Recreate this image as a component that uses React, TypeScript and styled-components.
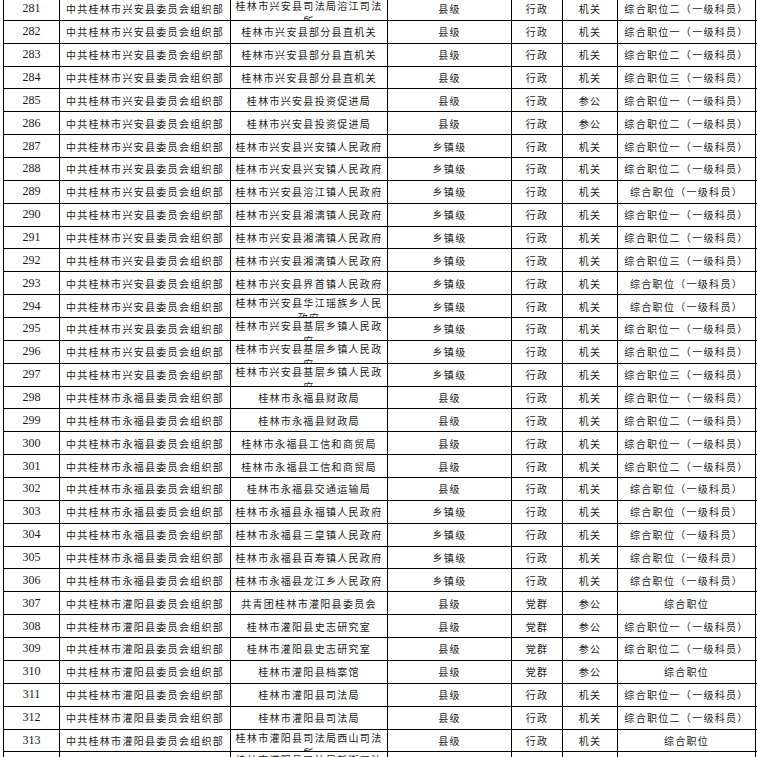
import { createGlobalStyle, styled } from "styled-components";

type Row = [number, string, string, string, string, string, string, boolean?];

const XA = "中共桂林市兴安县委员会组织部";
const YF = "中共桂林市永福县委员会组织部";
const GY = "中共桂林市灌阳县委员会组织部";

const rows: Row[] = [
  [281, XA, "桂林市兴安县司法局溶江司法所", "县级", "行政", "机关", "综合职位二（一级科员）", true],
  [282, XA, "桂林市兴安县部分县直机关", "县级", "行政", "机关", "综合职位一（一级科员）"],
  [283, XA, "桂林市兴安县部分县直机关", "县级", "行政", "机关", "综合职位二（一级科员）"],
  [284, XA, "桂林市兴安县部分县直机关", "县级", "行政", "机关", "综合职位三（一级科员）"],
  [285, XA, "桂林市兴安县投资促进局", "县级", "行政", "参公", "综合职位一（一级科员）"],
  [286, XA, "桂林市兴安县投资促进局", "县级", "行政", "参公", "综合职位二（一级科员）"],
  [287, XA, "桂林市兴安县兴安镇人民政府", "乡镇级", "行政", "机关", "综合职位一（一级科员）"],
  [288, XA, "桂林市兴安县兴安镇人民政府", "乡镇级", "行政", "机关", "综合职位二（一级科员）"],
  [289, XA, "桂林市兴安县溶江镇人民政府", "乡镇级", "行政", "机关", "综合职位（一级科员）"],
  [290, XA, "桂林市兴安县湘漓镇人民政府", "乡镇级", "行政", "机关", "综合职位一（一级科员）"],
  [291, XA, "桂林市兴安县湘漓镇人民政府", "乡镇级", "行政", "机关", "综合职位二（一级科员）"],
  [292, XA, "桂林市兴安县湘漓镇人民政府", "乡镇级", "行政", "机关", "综合职位三（一级科员）"],
  [293, XA, "桂林市兴安县界首镇人民政府", "乡镇级", "行政", "机关", "综合职位（一级科员）"],
  [294, XA, "桂林市兴安县华江瑶族乡人民政府", "乡镇级", "行政", "机关", "综合职位（一级科员）", true],
  [295, XA, "桂林市兴安县基层乡镇人民政府", "乡镇级", "行政", "机关", "综合职位一（一级科员）", true],
  [296, XA, "桂林市兴安县基层乡镇人民政府", "乡镇级", "行政", "机关", "综合职位二（一级科员）", true],
  [297, XA, "桂林市兴安县基层乡镇人民政府", "乡镇级", "行政", "机关", "综合职位三（一级科员）", true],
  [298, YF, "桂林市永福县财政局", "县级", "行政", "机关", "综合职位一（一级科员）"],
  [299, YF, "桂林市永福县财政局", "县级", "行政", "机关", "综合职位二（一级科员）"],
  [300, YF, "桂林市永福县工信和商贸局", "县级", "行政", "机关", "综合职位一（一级科员）"],
  [301, YF, "桂林市永福县工信和商贸局", "县级", "行政", "机关", "综合职位二（一级科员）"],
  [302, YF, "桂林市永福县交通运输局", "县级", "行政", "机关", "综合职位（一级科员）"],
  [303, YF, "桂林市永福县永福镇人民政府", "乡镇级", "行政", "机关", "综合职位（一级科员）"],
  [304, YF, "桂林市永福县三皇镇人民政府", "乡镇级", "行政", "机关", "综合职位（一级科员）"],
  [305, YF, "桂林市永福县百寿镇人民政府", "乡镇级", "行政", "机关", "综合职位（一级科员）"],
  [306, YF, "桂林市永福县龙江乡人民政府", "乡镇级", "行政", "机关", "综合职位（一级科员）"],
  [307, GY, "共青团桂林市灌阳县委员会", "县级", "党群", "参公", "综合职位"],
  [308, GY, "桂林市灌阳县史志研究室", "县级", "党群", "参公", "综合职位一（一级科员）"],
  [309, GY, "桂林市灌阳县史志研究室", "县级", "党群", "参公", "综合职位二（一级科员）"],
  [310, GY, "桂林市灌阳县档案馆", "县级", "党群", "参公", "综合职位"],
  [311, GY, "桂林市灌阳县司法局", "县级", "行政", "机关", "综合职位一（一级科员）"],
  [312, GY, "桂林市灌阳县司法局", "县级", "行政", "机关", "综合职位二（一级科员）"],
  [313, GY, "桂林市灌阳县司法局西山司法所", "县级", "行政", "机关", "综合职位", true],
  [314, GY, "桂林市灌阳县司法局新街司法所", "县级", "行政", "机关", "综合职位", true],
];

const GlobalStyle = createGlobalStyle`
  html, body {
    margin: 0;
    padding: 0;
    background: #ffffff;
    overflow: hidden;
  }
`;

const Sheet = styled.div`
  margin: -2px 0 0 3px;
  width: 753px;
  border-left: 1px solid #000;
  height: 760px;
  overflow: hidden;
`;

const TableRow = styled.div`
  display: grid;
  grid-template-columns: 56px 171px 157px 124px 51px 55px 138px;
  height: 22.87px;
  box-sizing: border-box;
  border-bottom: 1px solid #000;
`;

const Cell = styled.div<{ $wrap?: boolean; $num?: boolean }>`
  box-sizing: border-box;
  border-right: 1px solid #000;
  overflow: hidden;
  display: flex;
  justify-content: center;
  align-items: ${({ $wrap }) => ($wrap ? "flex-start" : "center")};
  text-align: center;
  color: #1a1a1a;
  font-family: ${({ $num }) =>
    $num
      ? '"Liberation Serif", "Times New Roman", serif'
      : '"Noto Sans CJK SC", "Noto Sans", sans-serif'};
  font-size: ${({ $num }) => ($num ? "12px" : "10px")};
  letter-spacing: ${({ $num }) => ($num ? "0" : "1.3px")};
  line-height: ${({ $wrap }) => ($wrap ? "15px" : "13px")};
  word-break: break-all;
`;

const CellText = styled.span`
  display: block;
  width: 100%;
`;

export default function App() {
  return (
    <>
      <GlobalStyle />
      <Sheet>
        {rows.map(([no, dept, unit, level, kind, nature, post, wrap]) => (
          <TableRow key={no}>
            <Cell $num>{no}</Cell>
            <Cell>{dept}</Cell>
            <Cell $wrap={wrap}>
              <CellText>{unit}</CellText>
            </Cell>
            <Cell>{level}</Cell>
            <Cell>{kind}</Cell>
            <Cell>{nature}</Cell>
            <Cell>{post}</Cell>
          </TableRow>
        ))}
      </Sheet>
    </>
  );
}
